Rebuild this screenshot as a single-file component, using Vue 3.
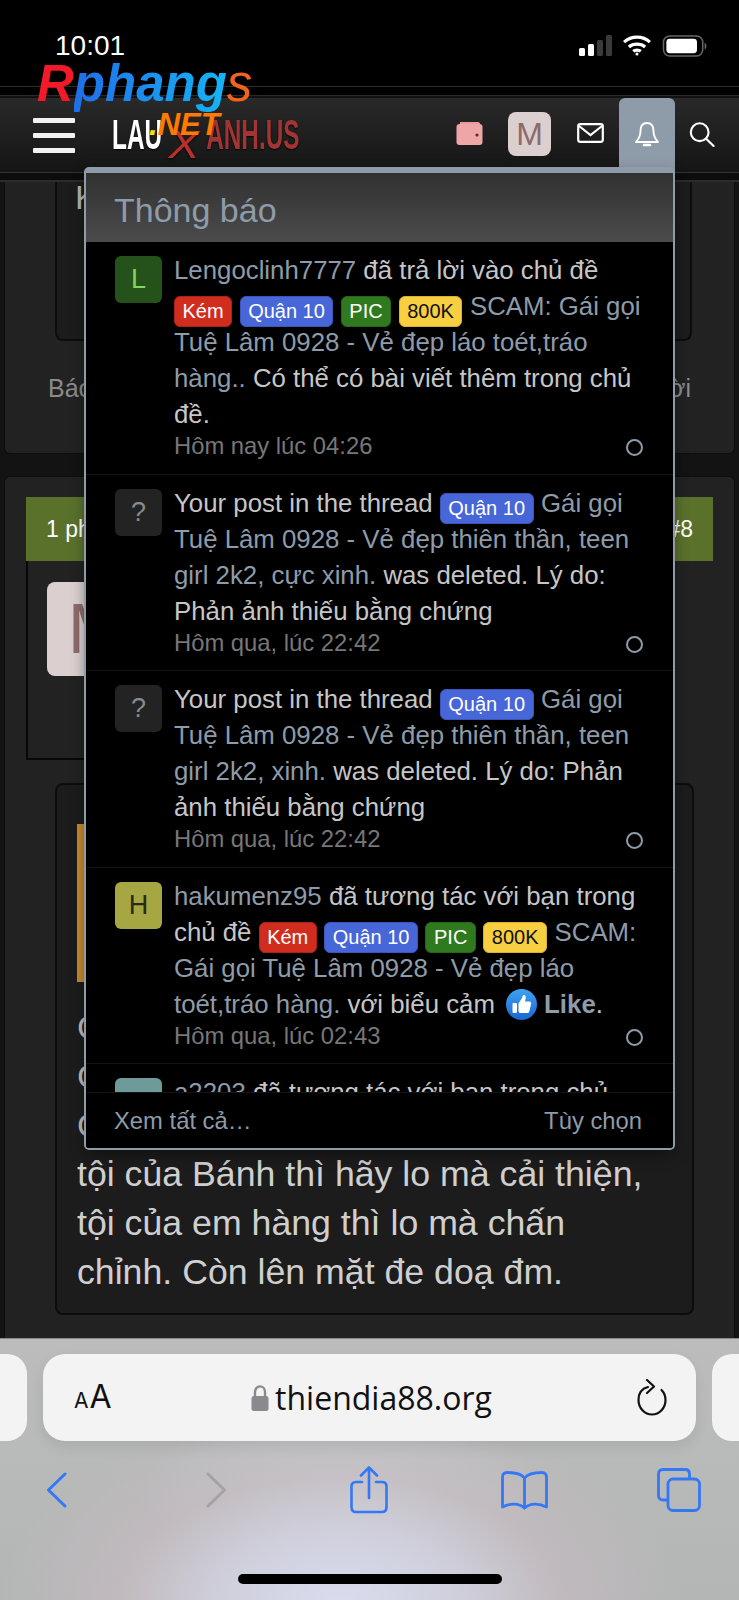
<script setup>
const B = {
  kem: { c: 'red', t: 'Kém' },
  q10: { c: 'blue', t: 'Quận 10' },
  pic: { c: 'green', t: 'PIC' },
  k800: { c: 'yellow', t: '800K' }
}
const b = (x) => ({ k: 'b', ...B[x] })
const l = (t) => ({ k: 'l', t })
const t = (t) => ({ k: 't', t })
const items = [
  {
    letter: 'L', av: 'av-green', time: 'Hôm nay lúc 04:26',
    lines: [
      [l('Lengoclinh7777'), t(' đã trả lời vào chủ đề')],
      [b('kem'), b('q10'), b('pic'), b('k800'), l('SCAM: Gái gọi')],
      [l('Tuệ Lâm 0928 - Vẻ đẹp láo toét,tráo')],
      [l('hàng..'), t(' Có thể có bài viết thêm trong chủ')],
      [t('đề.')]
    ]
  },
  {
    letter: '?', av: 'av-dark', time: 'Hôm qua, lúc 22:42',
    lines: [
      [t('Your post in the thread '), b('q10'), l('Gái gọi')],
      [l('Tuệ Lâm 0928 - Vẻ đẹp thiên thần, teen')],
      [l('girl 2k2, cực xinh.'), t(' was deleted. Lý do:')],
      [t('Phản ảnh thiếu bằng chứng')]
    ]
  },
  {
    letter: '?', av: 'av-dark', time: 'Hôm qua, lúc 22:42',
    lines: [
      [t('Your post in the thread '), b('q10'), l('Gái gọi')],
      [l('Tuệ Lâm 0928 - Vẻ đẹp thiên thần, teen')],
      [l('girl 2k2, xinh.'), t(' was deleted. Lý do: Phản')],
      [t('ảnh thiếu bằng chứng')]
    ]
  },
  {
    letter: 'H', av: 'av-olive', time: 'Hôm qua, lúc 02:43',
    lines: [
      [l('hakumenz95'), t(' đã tương tác với bạn trong')],
      [t('chủ đề '), b('kem'), b('q10'), b('pic'), b('k800'), l('SCAM:')],
      [l('Gái gọi Tuệ Lâm 0928 - Vẻ đẹp láo')],
      [l('toét,tráo hàng.'), t(' với biểu cảm '), { k: 'like' }, { k: 'strong', t: 'Like' }, t('.')]
    ]
  },
  {
    letter: '', av: 'av-teal', time: '',
    lines: [[l('a2203'), t(' đã tương tác với bạn trong chủ')]]
  }
]
</script>

<template>
  <div class="page">
    <div class="status">
      <span class="clock">10:01</span>
      <div class="status-icons">
        <svg width="33" height="21" viewBox="0 0 33 21">
          <rect x="0" y="13" width="6" height="8" rx="1.5" fill="#fff" />
          <rect x="9" y="9" width="6" height="12" rx="1.5" fill="#fff" />
          <rect x="18" y="5" width="6" height="16" rx="1.5" fill="#3a3a3a" />
          <rect x="27" y="0" width="6" height="21" rx="1.5" fill="#3a3a3a" />
        </svg>
        <svg width="30" height="21" viewBox="0 0 30 22" fill="none" stroke="#fff" stroke-width="3.4">
          <path d="M1.5 7.5 C9 0.5 21 0.5 28.5 7.5" />
          <path d="M6.5 12.5 C11 8.5 19 8.5 23.5 12.5" />
          <path d="M11 17 C13 15.4 17 15.4 19 17" />
          <circle cx="15" cy="20" r="1.6" fill="#fff" stroke="none" />
        </svg>
        <svg width="47" height="22" viewBox="0 0 48 23">
          <rect x="1" y="1" width="41" height="21" rx="6.5" fill="none" stroke="#666" stroke-width="1.6" />
          <rect x="4" y="4" width="32" height="15" rx="3.5" fill="#fff" />
          <path d="M44 8 C46.5 9 46.5 14 44 15 Z" fill="#666" />
        </svg>
      </div>
    </div>
    <div class="topline"></div>

    <div class="nav">
      <div class="burger"><i></i><i></i><i></i></div>
      <div class="logo">
        <span class="logo-w">LAU</span><span class="logo-x">X</span><span class="logo-r">ANH.US</span>
      </div>
      <div class="nav-right">
        <svg class="ic-wallet" width="27" height="24" viewBox="0 0 27 24">
          <path d="M4 1 H22 C23.5 1 24 2 24 3 H4 Z" fill="#e99a9a" />
          <rect x="0.5" y="3" width="26" height="21" rx="3" fill="#efa6a6" />
          <circle cx="21" cy="14" r="1.6" fill="#5b3030" />
        </svg>
        <div class="nav-av">M</div>
        <svg class="ic-mail" width="27" height="20" viewBox="0 0 27 20" fill="none" stroke="#fff" stroke-width="2.2">
          <rect x="1.2" y="1.2" width="24.6" height="17.6" rx="2" />
          <path d="M2 3 L13.5 12 L25 3" />
        </svg>
        <div class="bell-tab">
          <svg width="26" height="27" viewBox="0 0 26 27" fill="none" stroke="#fff" stroke-width="1.9" stroke-linejoin="round">
            <path d="M13 2 C8 2 6.5 6 6.5 10 C6.5 16 4.5 18 2 21 H24 C21.5 18 19.5 16 19.5 10 C19.5 6 18 2 13 2 Z" />
            <path d="M10 24 H16" stroke-width="2.6" stroke-linecap="round" />
          </svg>
        </div>
        <svg class="ic-search" width="26" height="25" viewBox="0 0 28 27" fill="none" stroke="#fff" stroke-width="2.3">
          <circle cx="11.5" cy="11" r="9.6" />
          <path d="M18.5 18 L26.5 26" stroke-linecap="round" />
        </svg>
      </div>
    </div>
    <div class="navline"></div>

    <div class="content">
      <section class="card card-top">
        <div class="box box-top"><span class="bg-text">K</span></div>
        <div class="card-foot"><span>Báo</span><span>ời</span></div>
      </section>
      <section class="card card-main">
        <div class="greenbar"><span>1 phút trước</span><span>#8</span></div>
        <div class="userbox"><div class="big-av">M</div></div>
        <div class="box box-msg">
          <div class="quote"></div>
          <div class="msg-frag">
            <span>C</span><span>C</span><span>C</span>
          </div>
          <p class="msg">tội của Bánh thì hãy lo mà cải thiện,<br />tội của em hàng thì lo mà chấn<br />chỉnh. Còn lên mặt đe doạ đm.</p>
        </div>
      </section>
    </div>

    <div class="safari">
      <div class="urlrow">
        <div class="side-pill side-l"></div>
        <div class="url">
          <span class="aa"><small>A</small>A</span>
          <span class="addr">
            <svg width="18" height="26" viewBox="0 0 18 26">
              <path d="M4 12 V7 C4 -0.5 14 -0.5 14 7 V12" fill="none" stroke="#8a8a8e" stroke-width="2.4" />
              <rect x="0.5" y="11" width="17" height="15" rx="2.5" fill="#8a8a8e" />
            </svg>
            <span>thiendia88.org</span>
          </span>
          <svg width="30" height="37" viewBox="0 0 30 37" fill="none" stroke="#111" stroke-width="2.2" stroke-linecap="round" stroke-linejoin="round">
            <path d="M11 8 C5 9.5 1.5 14.5 1.5 21 C1.5 29 7.5 35.5 15 35.5 C22.5 35.5 28.5 29 28.5 21 C28.5 17 27 13.5 24.5 11" />
            <path d="M10 1 L17 7.5 L10 14" />
          </svg>
        </div>
        <div class="side-pill side-r"></div>
      </div>
      <div class="tools">
        <svg width="21" height="36" viewBox="0 0 21 36" fill="none" stroke="#3478f6" stroke-width="3" stroke-linecap="round" stroke-linejoin="round"><path d="M19 2 L2.5 18 L19 34" /></svg>
        <svg width="21" height="36" viewBox="0 0 21 36" fill="none" stroke="#a3a3a5" stroke-width="3" stroke-linecap="round" stroke-linejoin="round"><path d="M2 2 L18.5 18 L2 34" /></svg>
        <svg width="38" height="48" viewBox="0 0 38 48" fill="none" stroke="#3478f6" stroke-width="2.6" stroke-linecap="round" stroke-linejoin="round">
          <path d="M12 16 H6 C3 16 1.5 17.5 1.5 20.5 V41 C1.5 44.5 3 46 6 46 H32 C35 46 36.5 44.5 36.5 41 V20.5 C36.5 17.5 35 16 32 16 H26" />
          <path d="M19 32 V2 M11 9.5 L19 1.5 L27 9.5" />
        </svg>
        <svg width="47" height="39" viewBox="0 0 47 39" fill="none" stroke="#3478f6" stroke-width="2.8" stroke-linecap="round" stroke-linejoin="round">
          <path d="M23.5 7 C20 2.5 14 1.5 6 1.5 C3 1.5 1.5 3 1.5 6 V36 C9 32 18 32 23.5 37 C29 32 38 32 45.5 36 V6 C45.5 3 44 1.5 41 1.5 C33 1.5 27 2.5 23.5 7 Z" />
          <path d="M23.5 7 V37" />
        </svg>
        <svg width="44" height="44" viewBox="0 0 44 44" fill="none" stroke="#3478f6" stroke-width="2.8" stroke-linejoin="round">
          <path d="M11 32 H6 C3 32 1.5 30.5 1.5 27.5 V6 C1.5 3 3 1.5 6 1.5 H28 C31 1.5 32.5 3 32.5 6 V11" />
          <rect x="11" y="11" width="31.5" height="31.5" rx="5" />
        </svg>
      </div>
      <div class="homebar"></div>
    </div>

    <div class="watermark">
      <div class="wm-main"><span class="wm-r">R</span><span class="wm-p">phang</span><span class="wm-s">s</span></div>
      <div class="wm-net"><span class="wm-dot">.</span>NET</div>
    </div>

    <aside class="popup">
      <header class="pop-head">Thông báo</header>
      <div class="pop-list">
        <article v-for="(it, i) in items" :key="i" class="item">
          <div class="avatar" :class="it.av">{{ it.letter }}</div>
          <div class="item-body">
            <div v-for="(line, j) in it.lines" :key="j" class="line">
              <template v-for="(s, n) in line" :key="n">
                <span v-if="s.k === 'b'" class="badge" :class="s.c">{{ s.t }}</span>
                <span v-else-if="s.k === 'l'" class="lnk">{{ s.t }}</span>
                <strong v-else-if="s.k === 'strong'" class="lnk">{{ s.t }}</strong>
                <svg v-else-if="s.k === 'like'" class="like" width="31" height="31" viewBox="0 0 31 31">
                  <defs>
                    <linearGradient id="likeg" x1="0" y1="0" x2="0" y2="1">
                      <stop offset="0" stop-color="#3ea2f2" />
                      <stop offset="1" stop-color="#1a66d2" />
                    </linearGradient>
                  </defs>
                  <circle cx="15.5" cy="15.5" r="15.5" fill="url(#likeg)" />
                  <rect x="6.5" y="14" width="4.5" height="10" rx="1" fill="#fff" />
                  <path d="M12.5 14.5 L16 9 C16.5 7 17 6 18 6 C19.5 6 20 7.5 19.6 9.5 L19 12.5 H23.5 C25 12.5 25.5 14 25 15.5 L23.3 22.5 C23 23.6 22.3 24 21.3 24 H14.5 C13.3 24 12.5 23.3 12.5 22 Z" fill="#fff" />
                </svg>
                <span v-else class="txt">{{ s.t }}</span>
              </template>
            </div>
            <div v-if="it.time" class="meta">
              <span>{{ it.time }}</span>
              <i class="dot"></i>
            </div>
          </div>
        </article>
      </div>
      <footer class="pop-foot"><span>Xem tất cả…</span><span>Tùy chọn</span></footer>
    </aside>
  </div>
</template>

<style scoped>
.page {
  position: relative;
  width: 739px;
  height: 1600px;
  overflow: hidden;
  display: flex;
  flex-direction: column;
  background: #000;
  font-family: "Liberation Sans", Arial, sans-serif;
}
.status {
  height: 86px;
  flex: none;
  display: flex;
  justify-content: space-between;
  padding: 30px 30px 0 55px;
  box-sizing: border-box;
}
.clock {
  color: #fff;
  font-size: 28px;
  line-height: 30px;
  height: 30px;
  margin-top: 1px;
}
.status-icons {
  display: flex;
  gap: 10px;
  align-items: flex-start;
  padding-top: 5px;
  margin-left: auto;
}
.topline {
  height: 12px;
  flex: none;
  background: linear-gradient(#2c2c2c 0 1px, #000 1px 9px, #2a2a2a 9px 10px, #111 10px);
}
.nav {
  height: 74px;
  flex: none;
  display: flex;
  align-items: center;
  padding-left: 33px;
  background: linear-gradient(#292929, #151515);
  box-sizing: border-box;
}
.burger {
  width: 42px;
  flex: none;
  display: flex;
  flex-direction: column;
  gap: 10px;
}
.burger i {
  display: block;
  height: 5px;
  border-radius: 1px;
  background: #f2f2f2;
}
.logo {
  margin-left: 37px;
  width: 323px;
  flex: none;
  height: 42px;
  display: flex;
  align-items: center;
  font-size: 42px;
  line-height: 42px;
  font-weight: 700;
  white-space: nowrap;
  transform: scaleX(0.58);
  transform-origin: 0 50%;
  margin-top: -1px;
  text-shadow: 0 1px 2px #000;
}
.logo-w { color: #fff; flex: none; }
.logo-x {
  flex: none;
  display: inline-block;
  width: 76px;
  text-align: center;
  color: #b83029;
  font-style: italic;
  font-size: 38px;
  font-weight: 400;
  transform: translateY(10px) scaleX(2.1);
}
.logo-r { color: #a33434; flex: none; }
.nav-right {
  position: relative;
  margin-left: auto;
  display: flex;
  align-items: center;
  height: 100%;
  padding-right: 24px;
}
.ic-wallet { margin-top: -4px; }
.nav-av {
  width: 43px;
  height: 44px;
  margin: -3px 0 0 25px;
  border-radius: 8px;
  background: #dccfcf;
  color: #8d6b6b;
  font-size: 32px;
  line-height: 44px;
  text-align: center;
}
.ic-mail { margin: -4px 0 0 26px; }
.bell-tab {
  width: 56px;
  height: 74px;
  margin-left: 15px;
  border-radius: 6px 6px 0 0;
  background: #8e9ba8;
  display: flex;
  justify-content: center;
  padding-top: 23px;
  box-sizing: border-box;
}
.ic-search { margin: -2px 0 0 14px; }
.navline {
  height: 10px;
  flex: none;
  background: linear-gradient(#333 0 1px, #0c0c0c 1px 8px, #2b2b2b 8px);
}
.content {
  flex: 1;
  min-height: 0;
  overflow: hidden;
  display: flex;
  flex-direction: column;
  gap: 22px;
  padding: 0 4px;
  background: #131313;
}
.card {
  background: #222;
  border: 1px solid #0e0e0e;
  border-radius: 0 0 6px 6px;
  box-sizing: border-box;
}
.card-top {
  height: 272px;
  flex: none;
  padding: 0 42px 0 50px;
  border-top: 0;
}
.box {
  background: #1c1c1c;
  border: 2px solid #0c0c0c;
  border-radius: 8px;
  box-sizing: border-box;
}
.box-top {
  height: 159px;
  border-top: 0;
  border-radius: 0 0 8px 8px;
  padding-left: 18px;
}
.bg-text {
  display: block;
  color: #b5b5b5;
  font-size: 34px;
  line-height: 30px;
}
.card-foot {
  display: flex;
  justify-content: space-between;
  margin: 29px 0 0 -7px;
  padding-right: 1px;
  color: #8b8b8b;
  font-size: 25px;
  line-height: 36px;
}
.card-main {
  flex: 1;
  min-height: 0;
  border-radius: 6px 6px 0 0;
  padding: 20px 21px 0;
  border-bottom: 0;
}
.greenbar {
  height: 64px;
  background: #5a712c;
  color: #fff;
  font-size: 23px;
  display: flex;
  justify-content: space-between;
  align-items: center;
  padding: 0 20px;
}
.userbox {
  width: 150px;
  height: 199px;
  border-left: 2px solid #080808;
  border-bottom: 2px solid #080808;
  box-sizing: border-box;
  padding: 21px 0 0 19px;
}
.big-av {
  width: 100px;
  height: 94px;
  border-radius: 8px;
  background: #dccfcf;
  color: #8d6b6b;
  font-size: 70px;
  line-height: 94px;
  text-align: center;
}
.box-msg {
  margin: 23px 19px 0 29px;
  height: 532px;
  padding: 39px 20px 0;
}
.quote {
  width: 8px;
  height: 158px;
  background: #c98a2e;
}
.msg-frag {
  display: flex;
  flex-direction: column;
  margin-top: 21px;
  color: #bdbdbd;
  font-size: 34px;
  line-height: 49px;
}
.msg {
  margin: 0;
  color: #cfcfcf;
  font-size: 35.7px;
  line-height: 49px;
  white-space: nowrap;
}
.safari {
  height: 262px;
  flex: none;
  position: relative;
  overflow: hidden;
  border-top: 1px solid #8c8c8c;
  box-sizing: border-box;
  background:
    radial-gradient(ellipse 340px 190px at 340px 262px, #dadcee 0%, rgba(210,210,224,.9) 35%, rgba(200,188,194,.6) 65%, rgba(190,190,190,0) 100%),
    radial-gradient(ellipse 200px 90px at 340px 150px, rgba(200,210,215,.7), rgba(190,190,190,0)),
    linear-gradient(#bcbcbc, #b4b6b6);
}
.urlrow {
  display: flex;
  gap: 16px;
  margin: 15px -27px 0 -27px;
  height: 87px;
}
.side-pill {
  width: 54px;
  background: #f3f3f3;
  flex: none;
}
.side-l { border-radius: 0 20px 20px 0; }
.side-r { border-radius: 20px 0 0 20px; }
.url {
  flex: 1;
  background: #f3f3f3;
  border-radius: 22px;
  display: flex;
  align-items: center;
  justify-content: space-between;
  padding: 0 29px 0 31px;
  box-shadow: 0 6px 14px rgba(0, 0, 0, .08);
}
.aa {
  color: #111;
  font-family: Inter, "Liberation Sans", sans-serif;
  font-size: 32px;
  width: 38px;
  white-space: nowrap;
  line-height: 32px;
  margin-top: 2px;
}
.aa small { font-size: 21px; margin-right: 1px; }
.addr {
  display: flex;
  align-items: center;
  gap: 6px;
  color: #111;
  font-family: "Open Sans", sans-serif;
  font-size: 32px;
  line-height: 40px;
  margin-right: 6px;
}
.tools {
  display: grid;
  grid-template-columns: 160px 144px 151px 156px auto;
  align-items: center;
  margin-top: 25px;
  padding-left: 46px;
  height: 48px;
}
.homebar {
  position: absolute;
  left: 238px;
  bottom: 16px;
  width: 264px;
  height: 10px;
  border-radius: 5px;
  background: #000;
}
.watermark {
  position: absolute;
  left: 37px;
  top: 54px;
  pointer-events: none;
  font-style: italic;
  font-weight: 700;
  white-space: nowrap;
}
.wm-main {
  font-size: 51px;
  line-height: 60px;
}
.wm-r { color: #f01a28; }
.wm-p {
  background: linear-gradient(90deg, #1f6ee8, #16b4f5);
  -webkit-background-clip: text;
  background-clip: text;
  color: transparent;
}
.wm-s { color: #f2641c; font-weight: 400; }
.wm-net {
  margin: -5px 0 0 112px;
  color: #ff7a00;
  font-size: 31px;
  line-height: 32px;
}
.wm-dot { color: #ffe100; }
.popup {
  position: absolute;
  left: 84px;
  top: 167px;
  width: 591px;
  height: 983px;
  display: flex;
  flex-direction: column;
  box-sizing: border-box;
  background: #000;
  border: 2px solid #8e9ba8;
  border-top-width: 6px;
  border-radius: 5px;
  box-shadow: 0 6px 14px rgba(0, 0, 0, .35);
  overflow: hidden;
}
.pop-head {
  height: 69px;
  flex: none;
  box-sizing: border-box;
  padding: 16px 0 0 28px;
  background: linear-gradient(#313131, #4b4b4b);
  color: #8e9ba8;
  font-size: 34px;
  line-height: 42px;
}
.pop-list {
  flex: 1;
  min-height: 0;
  overflow: hidden;
}
.item {
  display: flex;
  gap: 12px;
  padding: 14px 30px 12.5px 29px;
  border-bottom: 1px solid #141414;
}
.avatar {
  flex: none;
  width: 47px;
  height: 47px;
  border-radius: 6px;
  font-size: 27px;
  line-height: 47px;
  text-align: center;
}
.av-green { background: #25521b; color: #7fd75f; }
.av-dark { background: #232323; color: #8a8a8a; }
.av-olive { background: #a6a643; color: #2a2a10; }
.av-teal { background: #6f9a9a; }
.item-body {
  flex: 1;
  min-width: 0;
  margin-top: -4px;
}
.line {
  height: 36px;
  font-size: 25.8px;
  line-height: 36px;
  white-space: pre;
}
.txt { color: #c6c6c6; }
.lnk { color: #8e9ba8; }
.badge {
  display: inline-block;
  height: 31px;
  box-sizing: border-box;
  padding: 0 7.5px;
  margin-right: 7.5px;
  border: 1px solid;
  border-radius: 6px;
  font-size: 20px;
  line-height: 29px;
  vertical-align: -3px;
  color: #fff;
}
.red { background: #d12d1e; border-color: #a92418; }
.blue { background: #4766d8; border-color: #3a56bd; }
.green { background: #2f7a1e; border-color: #276518; }
.yellow { background: #f9cf42; border-color: #d9b133; color: #111; }
.like {
  vertical-align: -7px;
  margin: 0 7px 0 4px;
}
.meta {
  display: flex;
  justify-content: space-between;
  align-items: center;
  height: 30px;
  color: #777;
  font-size: 23.8px;
  line-height: 30px;
  margin-top: -1px;
}
.dot {
  display: block;
  width: 17px;
  height: 17px;
  box-sizing: border-box;
  border: 2px solid #8e9ba8;
  border-radius: 50%;
  margin-top: 3px;
}
.pop-foot {
  height: 56px;
  flex: none;
  box-sizing: border-box;
  display: flex;
  justify-content: space-between;
  align-items: center;
  padding: 0 31px 0 28px;
  border-top: 1px solid #141414;
  background: #000;
  color: #8e9ba8;
  font-size: 23.8px;
}
</style>
